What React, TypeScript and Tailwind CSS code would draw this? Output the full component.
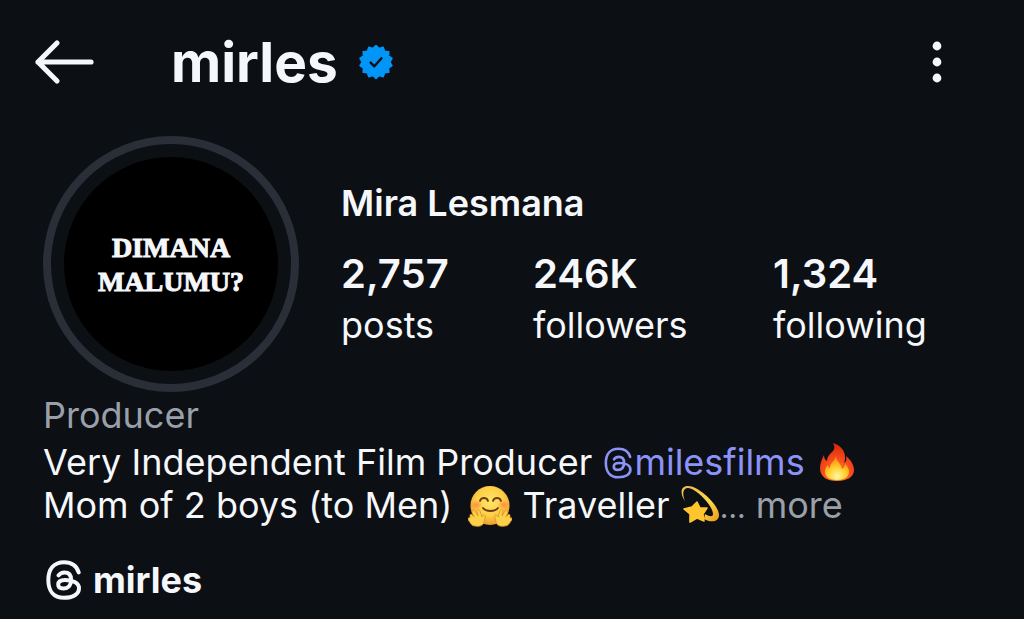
import type { ReactNode } from 'react'

interface IconProps {
    className?: string
}

interface StatProps {
    value: string
    label: string
}

const stats: StatProps[] = [
    { value: '2,757', label: 'posts' },
    { value: '246K', label: 'followers' },
    { value: '1,324', label: 'following' }
]

const badgePoints = Array.from({ length: 28 }, (_, i) => {
    const radius = i % 2 === 0 ? 16.4 : 13.8
    const angle = (i * Math.PI) / 14 - Math.PI / 2
    const x = 18 + radius * Math.cos(angle)
    const y = 18 + radius * Math.sin(angle)
    return `${x.toFixed(2)},${y.toFixed(2)}`
}).join(' ')

function BackIcon() {
    return (
        <svg
            viewBox="0 0 60 46"
            className="h-[46px] w-[60px]"
            fill="none"
            stroke="currentColor"
            strokeWidth="5.2"
            strokeLinecap="round"
            strokeLinejoin="round"
            aria-hidden="true"
        >
            <path d="M57 23H4M23 4 4 23l19 19" />
        </svg>
    )
}

function MoreIcon() {
    return (
        <svg
            viewBox="0 0 10 44"
            className="h-11 w-[10px]"
            fill="currentColor"
            aria-hidden="true"
        >
            <circle cx="5" cy="6" r="4.4" />
            <circle cx="5" cy="22" r="4.4" />
            <circle cx="5" cy="38" r="4.4" />
        </svg>
    )
}

function VerifiedBadge() {
    return (
        <svg
            viewBox="0 0 36 36"
            className="size-9 shrink-0"
            role="img"
            aria-label="Verified"
        >
            <polygon
                points={badgePoints}
                fill="#0095f6"
                stroke="#0095f6"
                strokeWidth="1.6"
                strokeLinejoin="round"
            />
            <path
                d="m12.6 18.6 3.7 3.7 7.2-8"
                fill="none"
                stroke="#0c0f14"
                strokeWidth="2.4"
                strokeLinecap="round"
                strokeLinejoin="round"
            />
        </svg>
    )
}

function ThreadsIcon({ className }: IconProps) {
    return (
        <svg
            viewBox="0 0 106 120"
            className={className}
            fill="none"
            stroke="currentColor"
            strokeLinecap="round"
            aria-hidden="true"
        >
            <path d="M99 37C93 17 77 6 55 6 23 6 7 28 7 60s16 54 47 54c28 0 46-11 46-29 0-17-20-25-43-25-13 0-20 5-20 14 0 8 6 12 15 12 13 0 24-8 24-27 0-15-7-22-20-22-8 0-14 3-18 9" />
        </svg>
    )
}

function FireEmoji() {
    return (
        <svg
            viewBox="0 0 36 40"
            className="mb-1.5 ml-1 inline-block h-10 w-9 align-middle"
            role="img"
            aria-label="fire"
        >
            <defs>
                <radialGradient id="flame" cx="0.5" cy="0.85" r="0.8">
                    <stop offset="0" stopColor="#ff9a1f" />
                    <stop offset="0.5" stopColor="#f9501c" />
                    <stop offset="1" stopColor="#d8290f" />
                </radialGradient>
                <radialGradient id="flameCore" cx="0.5" cy="0.85" r="0.75">
                    <stop offset="0" stopColor="#fff8a8" />
                    <stop offset="0.5" stopColor="#ffd02e" />
                    <stop offset="1" stopColor="#ff8a18" />
                </radialGradient>
            </defs>
            <path
                d="M14 1c7 2 12 7 12 14 0 2 0 4-1 6 2-1 3-3 2-7 5 4 8 9 8 14 0 7-7 11-17 11S1 35 1 26c0-5 2-9 4-13 0 3 1 5 3 6 0-4 2-6 5-9s3-5 1-9Z"
                fill="url(#flame)"
            />
            <path
                d="M17 14c0 5 5 7 6 13 2-1 3-3 3-5 3 3 4 5 4 8 0 5-5 8-12 8S6 35 6 30c0-3 1-5 3-7 0 2 1 3 2 3 0-5 5-7 6-12Z"
                fill="url(#flameCore)"
            />
        </svg>
    )
}

function HugEmoji() {
    return (
        <svg
            viewBox="0 0 44 42"
            className="mb-1 ml-1.5 inline-block h-[42px] w-11 align-middle"
            role="img"
            aria-label="hugging face"
        >
            <defs>
                <radialGradient id="face" cx="0.5" cy="0.4" r="0.6">
                    <stop offset="0" stopColor="#ffe566" />
                    <stop offset="0.6" stopColor="#fdcf45" />
                    <stop offset="1" stopColor="#f09a2c" />
                </radialGradient>
                <radialGradient id="blush">
                    <stop offset="0" stopColor="#ff7043" stopOpacity="0.7" />
                    <stop offset="1" stopColor="#ff7043" stopOpacity="0" />
                </radialGradient>
            </defs>
            <circle cx="22" cy="20.5" r="19.5" fill="url(#face)" />
            <ellipse cx="8.5" cy="20" rx="6" ry="5" fill="url(#blush)" />
            <ellipse cx="35.5" cy="20" rx="6" ry="5" fill="url(#blush)" />
            <g
                fill="none"
                stroke="#6b3a19"
                strokeWidth="1.8"
                strokeLinecap="round"
            >
                <path d="M12 16c1-4 7-4 8 0M25 16c1-4 7-4 8 0" />
                <path d="M15 23c3 4 12 4 15 0" />
            </g>
            <g fill="#fdd04a" stroke="#e0902a" strokeWidth="0.8">
                <path d="M2 30c1-2 3 0 4 2l-2-5c0-2 2-2 3-1l3 5-1-5c0-2 3-2 3 0l2 6c1-3 4-3 3 1l-1 4c-1 4-5 5-9 4-3 0-4-2-6-5-2-2-1-4 1-3Z" />
                <path d="M42 30c-1-2-3 0-4 2l2-5c0-2-2-2-3-1l-3 5 1-5c0-2-3-2-3 0l-2 6c-1-3-4-3-3 1l1 4c1 4 5 5 9 4 3 0 4-2 6-5 2-2 1-4-1-3Z" />
            </g>
        </svg>
    )
}

function DizzyEmoji() {
    return (
        <svg
            viewBox="0 0 40 38"
            className="mb-2 inline-block h-[38px] w-10 align-middle"
            role="img"
            aria-label="dizzy"
        >
            <defs>
                <linearGradient id="orbit" x1="0" y1="0" x2="1" y2="1">
                    <stop offset="0" stopColor="#e8b94e" />
                    <stop offset="0.6" stopColor="#ffd64a" />
                    <stop offset="1" stopColor="#e89a1c" />
                </linearGradient>
            </defs>
            <path
                d="M5 16C0 9 0 1 8 1c11 0 31 19 31 29 0 7-8 8-15 4l1-5c5 3 8 3 8 0C33 21 17 4 8 3 3 3 2 9 5 16Z"
                fill="url(#orbit)"
            />
            <path
                d="m17 17 3 6 7 0-4 6 1 7-7-3-7 4 0-8-6-5 8-2Z"
                fill="#ffc52e"
                stroke="#ffc52e"
                strokeWidth="1.6"
                strokeLinejoin="round"
            />
        </svg>
    )
}

function Avatar() {
    return (
        <button
            type="button"
            aria-label="View profile picture"
            className="size-64 shrink-0 rounded-full border-8 border-[#2a2f37] p-[13px]"
        >
            <span className="flex size-full flex-col items-center justify-center rounded-full bg-black pt-0.5 font-['Liberation_Serif',serif] text-[28px] leading-[34px] font-bold [-webkit-text-stroke:1px_currentColor]">
                <span>DIMANA</span>
                <span>MALUMU?</span>
            </span>
        </button>
    )
}

function Stat({ value, label }: StatProps) {
    return (
        <a href={`#${label}`} className="flex flex-col">
            <span className="text-[40px] leading-[52px] font-semibold">
                {value}
            </span>
            <span className="text-4xl leading-[50px]">{label}</span>
        </a>
    )
}

function BioLine({ children }: { children: ReactNode }) {
    return <p className="h-[43px] whitespace-nowrap">{children}</p>
}

export default function App() {
    return (
        <div className="min-h-screen bg-[#0c0f14] font-['Inter',sans-serif] text-[#f5f7fa]">
            <header className="flex h-[123px] items-center pr-[82px] pl-[34px]">
                <button type="button" aria-label="Back">
                    <BackIcon />
                </button>
                <h1 className="ml-[77px] text-[55px] leading-[60px] font-bold">
                    mirles
                </h1>
                <span className="ml-5">
                    <VerifiedBadge />
                </span>
                <button type="button" aria-label="Options" className="ml-auto">
                    <MoreIcon />
                </button>
            </header>

            <main className="pl-[43px]">
                <section className="flex pt-[13px]">
                    <Avatar />
                    <div className="ml-[42px] flex-1 pt-11 pr-[59px]">
                        <h2 className="text-4xl leading-[46px] font-semibold">
                            Mira Lesmana
                        </h2>
                        <div className="mt-[22px] grid grid-cols-[4fr_5fr_4fr]">
                            {stats.map((stat) => (
                                <Stat key={stat.label} {...stat} />
                            ))}
                        </div>
                    </div>
                </section>

                <section className="text-4xl leading-[43px]">
                    <p className="mt-0.5 mb-1 text-[#9aa0aa]">Producer</p>
                    <BioLine>
                        Very Independent Film Producer{' '}
                        <a
                            href="#milesfilms"
                            aria-label="@milesfilms"
                            className="ml-0.5 text-[#8b93f8]"
                        >
                            <ThreadsIcon className="mr-0.5 mb-1 inline-block h-8 w-7 stroke-10 align-middle" />
                            milesfilms
                        </a>{' '}
                        <FireEmoji />
                    </BioLine>
                    <BioLine>
                        Mom of 2 boys (to Men) <HugEmoji /> Traveller{' '}
                        <DizzyEmoji />
                        <button type="button" className="text-[#9aa0aa]">
                            <span className="text-3xl">…</span> more
                        </button>
                    </BioLine>
                </section>

                <a
                    href="#threads"
                    className="mt-[31px] inline-flex items-center gap-3 text-4xl leading-[44px] font-bold"
                >
                    <ThreadsIcon className="ml-[3px] h-10 w-[35px] stroke-12" />
                    mirles
                </a>
            </main>
        </div>
    )
}
